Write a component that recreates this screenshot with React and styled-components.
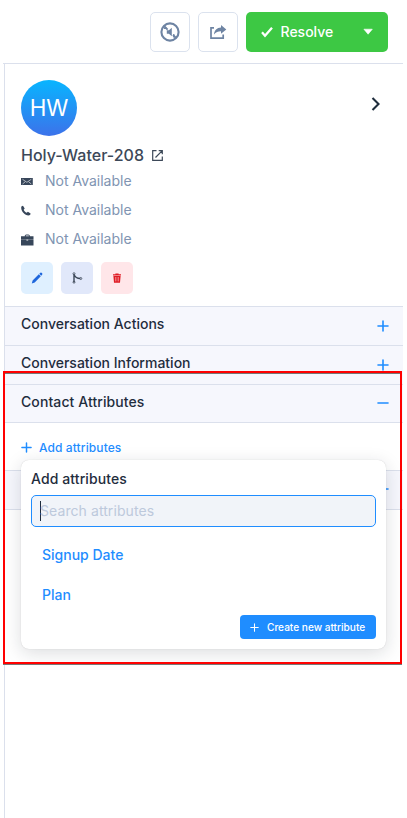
import React from 'react';
import styled, { createGlobalStyle } from 'styled-components';

const Global = createGlobalStyle`
  *{box-sizing:border-box}
  body{margin:0;background:#fff;font-family:Inter,sans-serif;color:#1f2d3d;overflow:hidden}
  button,input{font-family:inherit;margin:0}
  svg{display:block;flex:none}
`;
const Page = styled.div`position:relative;width:403px;height:818px;overflow:hidden;`;
const Toolbar = styled.header`
  display:flex;justify-content:flex-end;gap:8px;height:64px;margin-left:3px;
  padding:12px 15px 0 0;border-bottom:1px solid #dbe0ec;
`;
const ToolButton = styled.button`
  display:flex;align-items:center;justify-content:center;width:40px;height:40px;padding:0;
  background:#fff;border:1px solid #dbe2ee;border-radius:5px;color:#6e84a3;
`;
const Resolve = styled.button`
  display:flex;align-items:center;width:142px;height:40px;padding:0 14px 0 15px;border:0;border-radius:5px;
  background:#3dc844;color:#fff;font-size:14px;font-weight:500;
  span{margin-left:7.5px;flex:1;text-align:left;line-height:18px;padding-bottom:1px}
`;
const Panel = styled.main`height:754px;margin-left:4px;border-left:1px solid #dbe0ec;`;
const Profile = styled.section`height:242px;padding:16px;`;
const ProfileTop = styled.div`display:flex;justify-content:space-between;height:56px;`;
const Avatar = styled.div`
  width:56px;height:56px;border-radius:50%;background:linear-gradient(#08b5ff,#3c72ea);
  color:#fff;font-size:22.4px;line-height:56px;text-align:center;
`;
const Chevron = styled.div`padding:16px 3px 0 0;color:#1f2d3d;`;
const Name = styled.h1`
  display:flex;align-items:center;gap:7px;height:24px;margin:7px 0 0;
  font-size:16px;font-weight:500;letter-spacing:.02px;color:#3c4858;white-space:nowrap;
`;
const Details = styled.div`display:flex;flex-direction:column;gap:8px;margin-top:3px;`;
const Detail = styled.div`
  display:flex;align-items:center;height:21px;font-size:14px;color:#8094b2;
  svg{width:14px;height:14px;margin-right:10px;color:#37465a}
`;
const Actions = styled.div`display:flex;gap:8px;margin-top:13px;`;
const Action = styled.button`
  display:flex;align-items:center;justify-content:center;width:32px;height:32px;border:0;padding:0;border-radius:5px;
  color:${p => p.$color};background:${p => p.$bg};
`;
const Accordion = styled.div`
  display:flex;align-items:center;justify-content:space-between;height:${p => p.$height || 39}px;
  padding:0 14px 5px 16px;background:#f6f7fd;border-top:1px solid #dbe0ec;
  font-size:14px;font-weight:500;letter-spacing:${p => p.$spacing || 0}px;color:#1f2d3d;
  svg{margin-top:5px;color:#1f8dff}
`;
const Attributes = styled.section`height:48px;padding:15px 16px;border-top:1px solid #dbe0ec;`;
const AddLink = styled.div`
  display:flex;align-items:center;gap:7px;height:18px;font-size:12px;font-weight:500;letter-spacing:.1px;color:#1f8dff;
`;
const CoveredRow = styled(Accordion)`height:40px;justify-content:flex-end;border-bottom:1px solid #dbe0ec;`;
const Dropdown = styled.div`
  position:absolute;left:21px;top:460px;width:365px;height:189px;padding:10px;border-radius:8px;
  background:#fff;box-shadow:0 0 1px #0003,0 4px 18px #11182726;
`;
const DropTitle = styled.h2`margin:0;height:25px;font-size:14px;line-height:18px;font-weight:500;letter-spacing:.1px;`;
const Search = styled.div`
  display:flex;align-items:center;height:32px;padding:0 0 1px 8px;border:1px solid #1f8dff;border-radius:5px;
  background:#f1f4f9;color:#bdc9dc;font-size:14px;letter-spacing:.08px;
`;
const Caret = styled.span`width:1px;height:20px;background:#1f2d3d;margin-right:-1px;`;
const Options = styled.div`padding:8px 11px 0;`;
const Option = styled.div`height:40px;line-height:40px;color:#1f8dff;font-size:14px;font-weight:500;`;
const Create = styled.button`
  display:flex;align-items:center;gap:8px;width:136px;height:24px;margin-left:auto;padding:0 10px;
  border:0;border-radius:4px;background:#1f8dff;color:#fff;font-size:10.1px;font-weight:500;white-space:nowrap;
`;
const Highlight = styled.div`
  position:absolute;left:3px;top:371px;width:399px;height:293px;border:2px solid #f00;
  box-shadow:0 1px 0 #777,inset 0 1px 0 #777;pointer-events:none;
`;

const Plus = ({ size = 12, stroke = 1.6, minus }) => (
  <svg width={size} height={size} viewBox="0 0 12 12" fill="none" stroke="currentColor" strokeWidth={stroke} strokeLinecap="round">
    <path d={minus ? 'M1 5h10' : 'M1 6h10M6 1v10'} />
  </svg>
);
const Filled = ({ size = 14, children, vb = 24 }) => <svg width={size} height={size} viewBox={`0 0 ${vb} ${vb}`} fill="currentColor">{children}</svg>;

export default function App() {
  return (
    <>
      <Global />
      <Page>
        <Toolbar>
          <ToolButton aria-label="Mute">
            <svg width="20" height="20" viewBox="0 0 20 20" fill="none" stroke="currentColor">
              <circle cx="10" cy="10" r="8.6" strokeWidth="2.1" />
              <path d="M4 4l3.6 3.6M13 13l3 3" strokeWidth="1.9" />
              <path d="M6.8 8.2h2.1l2.9-2.4v8.4L8.9 11.8H6.8z" fill="currentColor" stroke="none" />
              <path d="M4 6.3h3M13.8 12v3.5" strokeWidth="1.2" />
            </svg>
          </ToolButton>
          <ToolButton aria-label="Share">
            <svg width="18" height="16" viewBox="0 0 18 16" fill="none" stroke="currentColor" strokeWidth="1.7">
              <path d="M5 3.8H2v10.4h12.2v-3.7" /><path d="M5 10.5C5.2 6.3 8 3.6 12 3.5V1l5.3 4.4-5.3 4.3V7.3C9 7.3 6.8 8.2 5 10.5z" fill="currentColor" stroke="none" />
            </svg>
          </ToolButton>
          <Resolve>
            <svg width="12" height="12" viewBox="0 0 12 12" fill="none" stroke="#fff" strokeWidth="2.3"><path d="M1 6.3l3 3.4L11 1.7" /></svg>
            <span>Resolve</span>
            <svg width="12" height="8" viewBox="0 0 12 8" fill="#fff" stroke="#fff" strokeWidth=".6" strokeLinejoin="round"><path d="M1.9 1.2h8.4L6.1 6.2z" /></svg>
          </Resolve>
        </Toolbar>
        <Panel>
          <Profile>
            <ProfileTop>
              <Avatar>HW</Avatar>
              <Chevron><svg width="16" height="16" viewBox="0 0 16 16" fill="none" stroke="currentColor" strokeWidth="2.1"><path d="M4.5 2l6 6-6 6" /></svg></Chevron>
            </ProfileTop>
            <Name>Holy-Water-208
              <svg width="13" height="13" viewBox="0 0 13 13" fill="none" stroke="currentColor" strokeWidth="1.2"><path d="M5.5 1.7H1.7v9.6h9.6V7.5M7.7 1.7h3.6v3.6M11.3 1.7L4.5 8.5" /></svg>
            </Name>
            <Details>
              <Detail>
                <Filled vb={14}><path d="M0 4h11.8v7H0z" /><path d="M1.5 5.3L5.9 8.3l4.4-3M1.5 10l2.7-2.2M10.3 10L7.6 7.8" fill="none" stroke="#fff" strokeWidth=".6" /></Filled>Not Available
              </Detail>
              <Detail><Filled vb={14}><path d="M.2 4.9C.2 3.5.8 3 2 2.8l1.7 2.8-1 1.1c.6 1.5 1.5 2.4 3 3l1.2-1 2.7 1.8c-.2 1.4-.9 1.9-2.1 1.9C3.7 12.1.5 8.7.2 4.9z" /></Filled>Not Available</Detail>
              <Detail><Filled vb={14}><path d="M0 4.2h3.8v-.7c0-1.5 5-1.5 5 0v.7h3.7v3.6H7.2v-.3H5.4v.3H0zM0 8.1h5.4v.3h1.8v-.3h5.3V13.4H0zM4.8 4.2h3v-.7h-3z" fillRule="evenodd" /></Filled>Not Available</Detail>
            </Details>
            <Actions>
              <Action $color="#1f67dc" $bg="#dff0ff" aria-label="Edit"><Filled size={12} vb={12}><path d="M.8 11.4l.8-2.9L7.8 2.3l2 2-6.1 6.2zM8.3 1.8L9.5.7c.8-.6 2.4.9 1.8 1.8l-1.1 1.3z" /></Filled></Action>
              <Action $color="#3c4858" $bg="#e1e8fa" aria-label="Merge">
                <svg width="12" height="12" viewBox="0 0 12 12" fill="none" stroke="currentColor"><path d="M3 2.2v8M3 2.5C4 5 6 6.5 9.2 6.5" strokeWidth="1.4" /><circle cx="3" cy="1.7" r="1" strokeWidth=".8" /><circle cx="3" cy="10.2" r="1" strokeWidth=".8" /><circle cx="9.8" cy="6.5" r="1" strokeWidth=".8" /></svg>
              </Action>
              <Action $color="#e01b24" $bg="#ffe6e9" aria-label="Delete"><Filled size={10} vb={10}><path d="M1 1.3h2.4V.5h3.2v.8H9v1.1H1zM1.4 3h7.2L8 9.7H2z" /><path d="M3.8 4v4.4M6.2 4v4.4" stroke="#ffe6e9" strokeWidth=".6" /></Filled></Action>
            </Actions>
          </Profile>
          <Accordion>Conversation Actions<Plus /></Accordion>
          <Accordion>Conversation Information<Plus /></Accordion>
          <Accordion $height={38} $spacing={0.09}>Contact Attributes<Plus minus /></Accordion>
          <Attributes><AddLink><Plus size={11} />Add attributes</AddLink></Attributes>
          <CoveredRow><Plus minus /></CoveredRow>
        </Panel>
        <Dropdown>
          <DropTitle>Add attributes</DropTitle>
          <Search><Caret />Search attributes</Search>
          <Options><Option>Signup Date</Option><Option>Plan</Option></Options>
          <Create><Plus size={9} stroke={1.4} />Create new attribute</Create>
        </Dropdown>
        <Highlight />
      </Page>
    </>
  );
}
